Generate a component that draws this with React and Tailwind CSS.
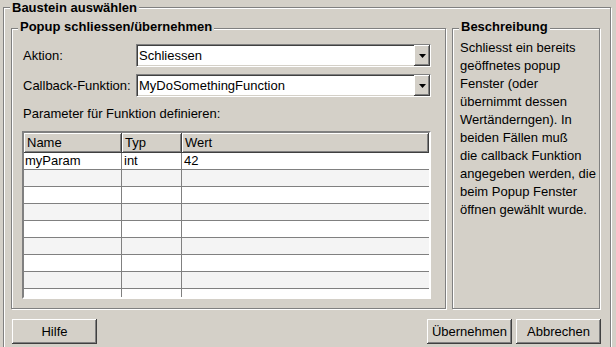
import clsx from "clsx";

const raised =
  "shadow-[inset_-1px_-1px_0_#404040,inset_1px_1px_0_#ffffff,inset_-2px_-2px_0_#808080]";
const sunken =
  "border border-t-[#808080] border-l-[#808080] border-r-white border-b-white shadow-[inset_1px_1px_0_#404040,inset_-1px_-1px_0_#d4d0c8]";

const rows = [
  { name: "myParam", typ: "int", wert: "42" },
  {}, {}, {}, {}, {}, {}, {}, {},
];

const beschreibung = [
  "Schliesst ein bereits",
  "geöffnetes popup",
  "Fenster (oder",
  "übernimmt dessen",
  "Wertänderngen). In",
  "beiden Fällen muß",
  "die callback Funktion",
  "angegeben werden, die",
  "beim Popup Fenster",
  "öffnen gewählt wurde.",
];

function GroupBox({ title, className, titleClass = "-top-[10px]", children }) {
  return (
    <div
      className={clsx(
        "relative border border-[#808080] shadow-[1px_1px_0_#ffffff,inset_1px_1px_0_#ffffff]",
        className
      )}
    >
      <span
        className={clsx(
          "absolute left-[6px] bg-[#d4d0c8] px-[2px] font-bold leading-[16px]",
          titleClass
        )}
      >
        {title}
      </span>
      {children}
    </div>
  );
}

function Combo({ value }) {
  return (
    <div className={clsx("flex h-[23px] flex-1 bg-white", sunken)}>
      <div className="flex flex-1 items-center pl-[2px] leading-[16px]">{value}</div>
      <div className={clsx("flex w-[16px] items-center justify-center bg-[#d4d0c8]", raised)}>
        <svg width="7" height="4" viewBox="0 0 7 4">
          <polygon points="0,0 7,0 3.5,4" fill="#000" />
        </svg>
      </div>
    </div>
  );
}

function Button({ children }) {
  return (
    <button
      className={clsx(
        "flex h-[25px] w-[85px] items-center justify-center bg-[#d4d0c8] leading-[16px]",
        raised
      )}
    >
      {children}
    </button>
  );
}

export default function App() {
  return (
    <div className="h-[347px] w-[616px] overflow-hidden bg-[#d4d0c8] pl-[3px] pr-[5px] pt-[7px] font-['Liberation_Sans',Arial,sans-serif] text-[13px] text-black">
      <GroupBox
        title="Baustein auswählen"
        titleClass="-top-[8px] leading-[14px]"
        className="h-[400px] pl-[7px] pr-[10px] pt-[20px]"
      >
        <div className="flex gap-[6px]">
          {/* linke Box */}
          <GroupBox
            title="Popup schliessen/übernehmen"
            className="h-[281px] w-[435px] pl-[10px] pr-[14px] pt-[15px]"
          >
            <div className="flex items-center">
              <div className="w-[114px] pl-[1px]">Aktion:</div>
              <Combo value="Schliessen" />
            </div>
            <div className="mt-[7px] flex items-center">
              <div className="w-[114px] pl-[1px]">Callback-Funktion:</div>
              <Combo value="MyDoSomethingFunction" />
            </div>
            <div className="mt-[9px] pl-[1px] leading-[16px]">Parameter für Funktion definieren:</div>

            <div className="mt-[9px] h-[168px] overflow-hidden border-2 border-t-[#808080] border-l-[#808080] border-r-white border-b-white bg-white">
              <div className="flex h-[20px] bg-[#d4d0c8] leading-[16px]">
                <div className={clsx("flex w-[98px] items-center pl-[3px]", raised)}>Name</div>
                <div className={clsx("flex w-[60px] items-center pl-[3px]", raised)}>Typ</div>
                <div className={clsx("flex flex-1 items-center pl-[3px]", raised)}>Wert</div>
              </div>
              {rows.map((r, i) => (
                <div
                  key={i}
                  className={clsx(
                    "flex h-[17px] border-b border-[#808080] leading-[16px]",
                    i % 2 === 0 ? "bg-white" : "bg-[#f4f4f4]"
                  )}
                >
                  <div className="w-[98px] border-r border-[#808080] pl-[1px]">{r.name}</div>
                  <div className="w-[60px] border-r border-[#808080] pl-[2px]">{r.typ}</div>
                  <div className="flex-1 pl-[2px]">{r.wert}</div>
                </div>
              ))}
            </div>
          </GroupBox>

          {/* rechte Box */}
          <GroupBox title="Beschreibung" className="h-[281px] w-[148px] pl-[7px] pt-[10px]">
            {beschreibung.map((line) => (
              <div key={line} className="whitespace-nowrap leading-[18px]">
                {line}
              </div>
            ))}
          </GroupBox>
        </div>

        <div className="-mr-[1px] ml-[1px] mt-[10px] flex justify-between">
          <Button>Hilfe</Button>
          <div className="flex gap-[4px]">
            <Button>Übernehmen</Button>
            <Button>Abbrechen</Button>
          </div>
        </div>
      </GroupBox>
    </div>
  );
}
